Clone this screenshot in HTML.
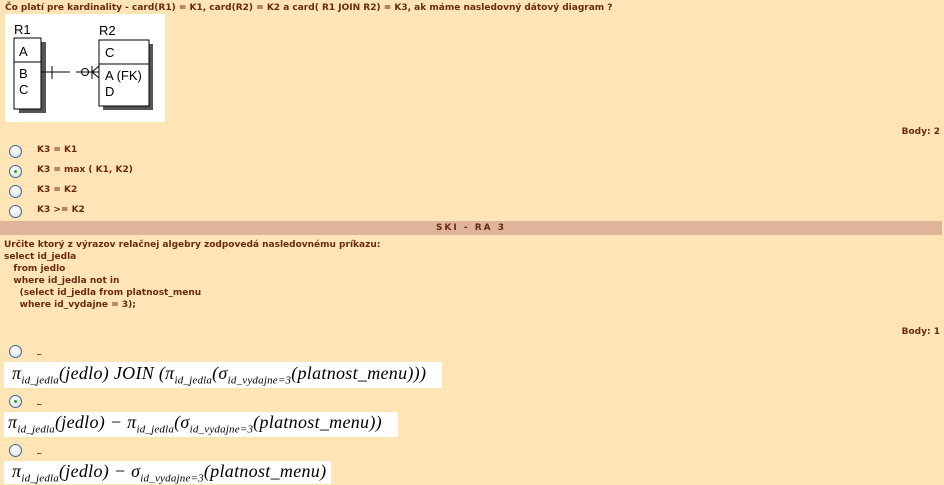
<!DOCTYPE html>
<html><head><meta charset="utf-8"><style>
body{margin:0;width:944px;height:484px;background:#FFE4B5;overflow:hidden;position:relative;font-family:"DejaVu Sans","Liberation Sans",sans-serif;font-weight:bold;font-size:9px;color:#6B2A10}
.a{position:absolute;white-space:pre}
.r{position:absolute;width:13px;height:13px;border-radius:50%;border:1px solid #3d6a98;background:radial-gradient(circle at 40% 35%,#fff,#d5dde5);box-sizing:border-box}
.r.on::after{content:"";position:absolute;left:4px;top:4px;width:3px;height:3px;border-radius:50%;background:#2aa02a}
.w{position:absolute;background:#fff}
.m{position:absolute;font-family:"Liberation Serif",serif;font-style:italic;font-weight:normal;font-size:18px;letter-spacing:0.3px;color:#000;white-space:nowrap}
.m sub{font-size:11px;letter-spacing:0.2px}
</style></head><body>
<div class="a" style="left:5px;top:3px">Čo platí pre kardinality - card(R1) = K1, card(R2) = K2 a card( R1 JOIN R2) = K3, ak máme nasledovný dátový diagram ?</div>
<div class="w" style="left:5px;top:14px;width:160px;height:108px">
<svg width="160" height="108" style="font-family:'Liberation Sans',sans-serif;font-size:13px;font-weight:normal">
<rect x="14" y="28" width="27" height="71" fill="#555"/>
<rect x="9" y="24" width="27" height="71" fill="#fff" stroke="#000"/>
<line x1="9" y1="48" x2="36" y2="48" stroke="#000"/>
<text x="9" y="20">R1</text><text x="14" y="42">A</text><text x="14" y="64">B</text><text x="14" y="80">C</text>
<rect x="98" y="30" width="50" height="66" fill="#555"/>
<rect x="94" y="26" width="50" height="66" fill="#fff" stroke="#000"/>
<line x1="94" y1="50" x2="144" y2="50" stroke="#000"/>
<text x="94" y="21">R2</text><text x="100" y="43">C</text><text x="100" y="66">A (FK)</text><text x="100" y="82">D</text>
<line x1="36" y1="58" x2="65" y2="58" stroke="#000"/><line x1="71" y1="58" x2="94" y2="58" stroke="#000"/>
<line x1="47" y1="52" x2="47" y2="65" stroke="#000"/>
<circle cx="80" cy="58" r="3.5" fill="none" stroke="#000"/>
<line x1="87" y1="52" x2="87" y2="65" stroke="#000"/>
<line x1="87" y1="58" x2="94" y2="52" stroke="#000"/><line x1="87" y1="58" x2="94" y2="64" stroke="#000"/>
</svg></div>
<div class="a" style="right:4px;top:127px">Body: 2</div>
<div class="r" style="left:9px;top:145px"></div><div class="a" style="left:37px;top:145px">K3 = K1</div>
<div class="r on" style="left:9px;top:165px"></div><div class="a" style="left:37px;top:165px">K3 = max ( K1, K2)</div>
<div class="r" style="left:9px;top:185px"></div><div class="a" style="left:37px;top:185px">K3 = K2</div>
<div class="r" style="left:9px;top:205px"></div><div class="a" style="left:37px;top:205px">K3 &gt;= K2</div>
<div class="a" style="left:0;top:221px;width:942px;height:14px;background:#E0B49A;text-align:center;line-height:14px;letter-spacing:2px">SKI - RA 3</div>
<div class="a" style="left:4px;top:239px;line-height:12px">Určite ktorý z výrazov relačnej algebry zodpovedá nasledovnému príkazu:
select id_jedla
   from jedlo
   where id_jedla not in
     (select id_jedla from platnost_menu
     where id_vydajne = 3);</div>
<div class="a" style="right:4px;top:327px">Body: 1</div>
<div class="r" style="left:9px;top:345px"></div><div class="a" style="left:37px;top:346px">_</div>
<div class="w" style="left:4px;top:362px;width:438px;height:26px"><div class="m" style="left:8px;top:1px">π<sub>id_jedla</sub>(jedlo) JOIN (π<sub>id_jedla</sub>(σ<sub>id_vydajne=3</sub>(platnost_menu)))</div></div>
<div class="r on" style="left:9px;top:395px"></div><div class="a" style="left:37px;top:396px">_</div>
<div class="w" style="left:4px;top:412px;width:394px;height:25px"><div class="m" style="left:4px;top:0px">π<sub>id_jedla</sub>(jedlo) − π<sub>id_jedla</sub>(σ<sub>id_vydajne=3</sub>(platnost_menu))</div></div>
<div class="r" style="left:9px;top:444px"></div><div class="a" style="left:37px;top:445px">_</div>
<div class="w" style="left:4px;top:461px;width:327px;height:23px"><div class="m" style="left:8px;top:0px">π<sub>id_jedla</sub>(jedlo) − σ<sub>id_vydajne=3</sub>(platnost_menu)</div></div>
</body></html>
